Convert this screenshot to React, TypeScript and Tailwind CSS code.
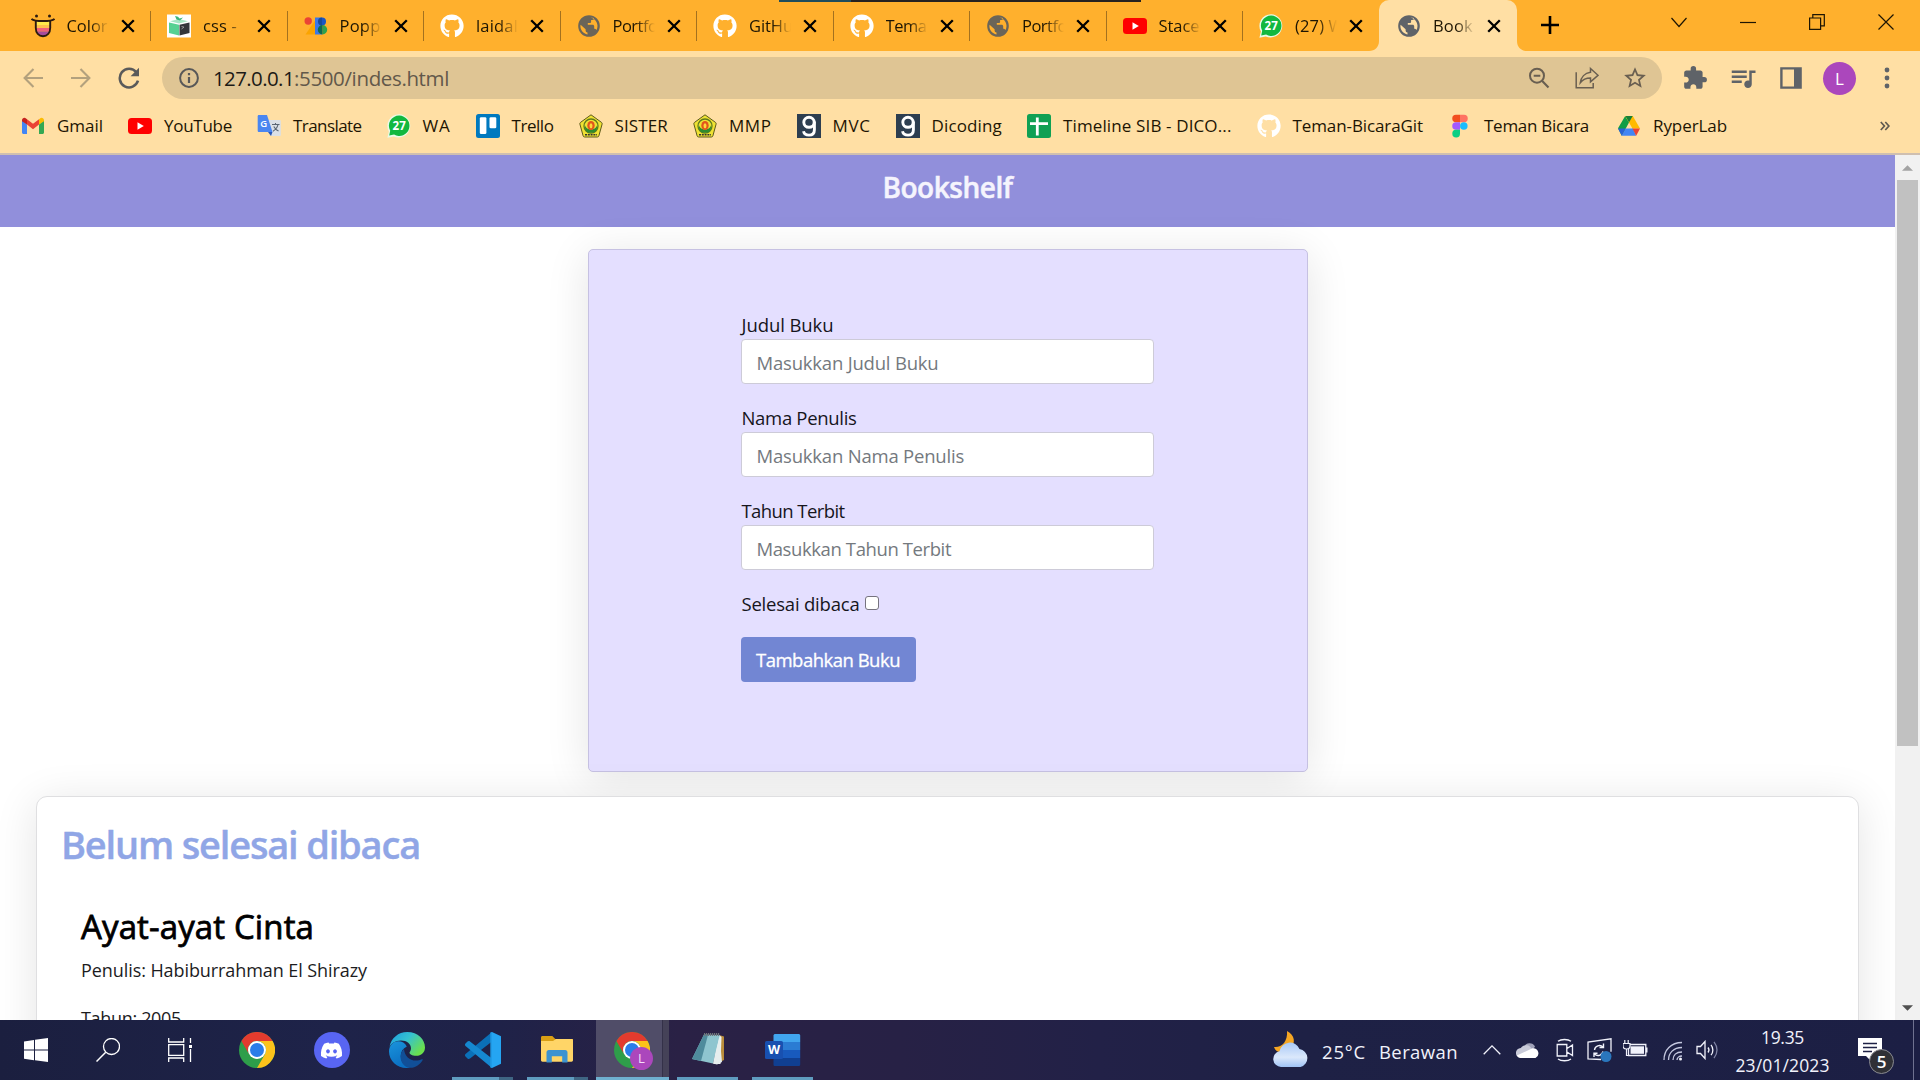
import { useLayoutEffect, useRef, type ReactNode } from "react";
import { FaGithub, FaDiscord } from "react-icons/fa";
import { MdExtension, MdQueueMusic, MdStarBorder } from "react-icons/md";

/** Text whose letter spacing is adjusted so that it spans exactly `w` pixels. */
function Fit({ w, className = "", children }: { w: number; className?: string; children: string }) {
  const ref = useRef<HTMLSpanElement>(null);
  useLayoutEffect(() => {
    const el = ref.current;
    if (!el) return;
    el.style.letterSpacing = "0px";
    const natural = el.getBoundingClientRect().width;
    el.style.letterSpacing = `${(w - natural) / children.length}px`;
  }, [w, children]);
  return (
    <span ref={ref} className={`inline-block shrink-0 whitespace-pre ${className}`}>
      {children}
    </span>
  );
}

/* ---------- site icons (24 x 24) ---------- */

const Github = () => <FaGithub className="size-6 text-white" />;

const YouTube = () => (
  <svg viewBox="0 0 24 24" className="size-6">
    <rect x="0" y="4" width="24" height="16" rx="3.5" fill="#f00" />
    <path d="M9.5 8.3v7.4l6.3-3.7z" fill="#fff" />
  </svg>
);

const Globe = ({ c = "#6b6558" }: { c?: string }) => (
  <svg viewBox="0 0 24 24" className="size-6">
    <path
      fill={c}
      fillRule="evenodd"
      d="M12 1.2a10.8 10.8 0 1 0 0 21.6 10.8 10.8 0 0 0 0-21.6zM13.5 3.5c4 .8 7 4.200 7 8.500 0 1.500-.4 2.900-1 4.100-.5-1-1.300-1.300-2.300-1.300v-2.400c0-1-.7-1.600-1.600-1.600h-4.800V9h2c.8 0 1.300-.6 1.300-1.300V6h1.200c1.200 0 1.900-.9 1.700-2zM3.600 10.800l5 4.400v1.200c0 1.200.8 2 1.900 2v2c-4.200-.7-7.100-4.200-7.100-8.300z"
    />
  </svg>
);

const ColorHunt = () => (
  <svg viewBox="0 0 24 24" className="size-6">
    <circle cx="5.500" cy="1.900" r="1.500" fill="#2b1a10" />
    <circle cx="18.500" cy="1.900" r="1.500" fill="#2b1a10" />
    <path d="M5 7h14v4H5z" fill="#ffe94a" />
    <path d="M5 11h14v3H5z" fill="#ffc04d" />
    <path d="M5 14h14c0 1.600-.3 2.600-.9 3.500H5.900C5.200 16.500 5 15.500 5 14z" fill="#f0607a" />
    <path d="M5.900 17.500h12.200C17 20.300 14.700 22 12 22s-5-1.700-6.100-4.500z" fill="#a64b9c" />
    <path d="M.5 4.800C2.500 7 6 7 12 7s9.500 0 11.500-2.200M4.800 7v7c0 5 3 8.200 7.200 8.200s7.200-3.200 7.200-8.200V7" fill="none" stroke="#2b1a10" strokeWidth="1.900" />
  </svg>
);

const CodeBox = () => (
  <svg viewBox="0 0 24 24" className="size-6">
    <path d="M0 .5h24v23H0z" fill="#fff" />
    <path d="M2 8.500l10 2.300V21.500L2 19z" fill="#57d193" />
    <path d="M12.500 10.800L22.500 8.500V19l-10 2.500z" fill="#33363b" />
    <path d="M3 7.200L12 5l9 2.200-9 2.300z" fill="#a5e6c5" />
    <path d="M8 2l3 .8 1.500 1.700L16 3.500l-3 3-3.500-1z" fill="#3fb57c" />
    <path d="M14.500 12.500l2.500.6L14.500 15" stroke="#aaa" fill="none" strokeWidth=".8" />
  </svg>
);

const GoogleFonts = () => (
  <svg viewBox="0 0 24 24" className="size-6">
    <path d="M11 6.500V20.500H1.500z" fill="#fba400" />
    <circle cx="4.200" cy="7" r="3.700" fill="#ea4335" />
    <path d="M11 3.500h7v17h-7z" fill="#3b78e7" />
    <path d="M18 3.500a4 4 0 0 1 0 8z" fill="#1a56c4" />
    <path d="M18 3.500a4 4 0 0 0 0 8z" fill="#174a9c" />
    <path d="M18.500 11a4.700 4.700 0 1 1 0 9.400z" fill="#2ea24e" />
    <path d="M18.500 11a4.700 4.700 0 0 0 0 9.400z" fill="#0f6a50" />
  </svg>
);

const WhatsApp = () => (
  <svg viewBox="0 0 24 24" className="size-6">
    <path d="M12 .3a11.600 11.600 0 0 0-10.100 17.300L.4 23.700l6.300-1.300A11.600 11.600 0 1 0 12 .3z" fill="#e9fbe9" />
    <path d="M12.200 1.600a10.200 10.200 0 0 0-9 15.200l-1 4.800 4.900-1A10.200 10.200 0 1 0 12.200 1.600z" fill="#12b83f" />
    <text x="12.200" y="16" textAnchor="middle" fontSize="11.500" fontWeight="700" fill="#fff" fontFamily="Open Sans, sans-serif">27</text>
  </svg>
);

const Gmail = () => (
  <svg viewBox="0 0 24 24" className="size-6">
    <path d="M1 6v12.500c0 .9.700 1.500 1.500 1.500H6v-9.500z" fill="#4285f4" />
    <path d="M23 6v12.500c0 .9-.7 1.500-1.500 1.500H18v-9.500z" fill="#34a853" />
    <path d="M6 10.500V5.200l6 4.600 6-4.600v5.300l-6 4.700z" fill="#ea4335" />
    <path d="M1 6.300C1 4 3.600 3.200 5 4.400l1 .8v5.300L1 7.200z" fill="#c5221f" />
    <path d="M23 6.300c0-2.300-2.600-3.100-4-1.900l-1 .8v5.300l5-3.300z" fill="#fbbc04" />
  </svg>
);

const Translate = () => (
  <svg viewBox="0 0 24 24" className="size-6">
    <path d="M10 6h12.500c.8 0 1.300.5 1.300 1.300v13.400c0 .8-.5 1.300-1.300 1.300H14z" fill="#dbe0e6" />
    <path d="M2 1h8l5.500 17H2C1.200 18 .7 17.500.7 16.700V2.300C.7 1.500 1.200 1 2 1z" fill="#4a86f0" />
    <path d="M11 18h4.500L14 22z" fill="#2857b8" />
    <text x="6.800" y="12.800" textAnchor="middle" fontSize="9.500" fontWeight="600" fill="#fff" fontFamily="Open Sans, sans-serif">G</text>
    <path d="M15 10.500h7.500M18.500 9v1.500M21 10.500c-.6 3-2.700 5.300-5 6.700M16.800 12.500c1 2 2.800 3.600 4.700 4.500" stroke="#5b6673" strokeWidth="1.100" fill="none" />
  </svg>
);

const Trello = () => (
  <svg viewBox="0 0 24 24" className="size-6">
    <rect width="24" height="24" rx="2.500" fill="#0079bf" />
    <rect x="3.800" y="3.300" width="6.600" height="16.800" rx="1.300" fill="#fff" />
    <rect x="13.500" y="3.300" width="6.800" height="11" rx="1.300" fill="#fff" />
  </svg>
);

const Campus = () => (
  <svg viewBox="0 0 24 24" className="size-6">
    <path d="M12 .8l10.500 7.600c.6.500.8 1 .6 1.700l-3.200 11.700c-.2.700-.7 1.200-1.500 1.200H5.600c-.8 0-1.300-.5-1.500-1.200L.9 10.100c-.2-.7 0-1.200.6-1.700z" fill="#efe234" stroke="#5c5a1c" strokeWidth="1" />
    <circle cx="12" cy="12" r="7" fill="none" stroke="#5f7a1d" strokeWidth="1.300" />
    <path d="M6 11.500C7.500 17 16.500 17 18 11.500c.5 3-.8 6-3 7H9c-2.200-1-3.500-4-3-7z" fill="#2e8b2e" />
    <ellipse cx="12" cy="11.500" rx="3.700" ry="4.600" fill="#e2561c" />
    <ellipse cx="12" cy="11.800" rx="1.500" ry="2.600" fill="#ffd83a" />
    <path d="M6 20.700h12" stroke="#333" strokeWidth="1.500" strokeDasharray="2 .8" />
  </svg>
);

const Dicoding = () => (
  <svg viewBox="0 0 24 24" className="size-6">
    <rect width="24" height="24" fill="#2d3e50" />
    <ellipse cx="12" cy="8.300" rx="5.200" ry="5" fill="none" stroke="#fff" strokeWidth="2.900" />
    <path d="M17.400 7.500v8.200c0 3.500-2 5.400-5.400 5.400-3 0-5-1.400-5.500-3.800" fill="none" stroke="#fff" strokeWidth="2.900" />
  </svg>
);

const Sheets = () => (
  <svg viewBox="0 0 24 24" className="size-6">
    <rect width="24" height="24" rx="2.500" fill="#10a054" />
    <path d="M3 9.600h18M10.300 3.500v18" stroke="#fff" strokeWidth="2.800" />
  </svg>
);

const Figma = () => (
  <svg viewBox="0 0 24 24" className="size-6">
    <path d="M12 .8H8a3.750 3.750 0 0 0 0 7.500h4z" fill="#f24e1e" />
    <path d="M12 .8h4a3.750 3.750 0 0 1 0 7.500h-4z" fill="#ff7262" />
    <path d="M12 8.300H8a3.750 3.750 0 0 0 0 7.500h4z" fill="#a259ff" />
    <circle cx="15.800" cy="12.050" r="3.750" fill="#1abcfe" />
    <path d="M8 15.800h4v3.750a3.850 3.850 0 1 1-4-3.750z" fill="#0acf83" />
  </svg>
);

const Drive = () => (
  <svg viewBox="0 0 24 24" className="size-6">
    <path d="M8.200 2L12 8.600 8.900 14.200 4.800 21.700 1 14.200z" fill="#0f9d45" />
    <path d="M8.200 2h7.600L23 14.500h-7.600L12 8.600z" fill="#ffba00" />
    <path d="M8.400 2h7.300L12 8.600z" fill="#188038" />
    <path d="M8.700 14.500H16l3.200 7.200H4.700z" fill="#4285f4" />
    <path d="M15.400 14.500H23l-3.800 7.200z" fill="#ea4335" />
    <path d="M1 14.500h7.700l-4 7.200z" fill="#2a62d6" />
  </svg>
);

const Chrome = () => (
  <svg viewBox="0 0 36 36" className="size-9">
    <circle cx="18" cy="18" r="18" fill="#2e9e4a" />
    <path d="M2.400 9A18 18 0 0 1 33.600 9H18a9 9 0 0 0-7.800 13.500z" fill="#e33b2e" />
    <path d="M33.600 9A18 18 0 0 1 18 36l7.800-13.500A9 9 0 0 0 25.800 13.500 9 9 0 0 0 18 9z" fill="#fcc21b" />
    <circle cx="18" cy="18" r="9" fill="#fff" />
    <circle cx="18" cy="18" r="7" fill="#2a7de9" />
  </svg>
);

/* ---------- browser chrome ---------- */

const CloseX = () => (
  <svg viewBox="0 0 14 14" className="size-[14px] shrink-0">
    <path d="M1.200 1.200l11.600 11.600M12.800 1.200L1.200 12.800" stroke="#000" strokeWidth="2.300" />
  </svg>
);

const tabs: { icon: ReactNode; title: string; w: number }[] = [
  { icon: <ColorHunt />, title: "Color", w: 41 },
  { icon: <CodeBox />, title: "css -", w: 34 },
  { icon: <GoogleFonts />, title: "Popp", w: 41 },
  { icon: <Github />, title: "laidal", w: 42 },
  { icon: <Globe />, title: "Portfo", w: 45 },
  { icon: <Github />, title: "GitHu", w: 44 },
  { icon: <Github />, title: "Tema", w: 41 },
  { icon: <Globe />, title: "Portfo", w: 45 },
  { icon: <YouTube />, title: "Stace", w: 41 },
  { icon: <WhatsApp />, title: "(27) W", w: 49 },
];

function TabBody({ icon, title, w }: { icon: ReactNode; title: string; w: number }) {
  return (
    <>
      <div className="flex w-6 shrink-0 justify-center">{icon}</div>
      <div className="ml-3 w-[42px] shrink-0 overflow-hidden text-[16.500px] leading-6 text-[#1d1503] [mask-image:linear-gradient(to_right,black_55%,transparent_100%)]">
        <Fit w={w}>{title}</Fit>
      </div>
      <div className="ml-[12px] flex">
        <CloseX />
      </div>
    </>
  );
}

function TabStrip() {
  return (
    <div className="relative flex h-[51px] bg-[#ffb02d]">
      <div className="absolute left-[779px] top-0 flex h-[2px] w-[362px] bg-[#262220]">
        <div className="w-[72px] bg-[#1f4d5c]" />
      </div>
      <div className="flex w-[1379px] pl-[14.500px]">
        {tabs.map((t, i) => (
          <div key={i} className="flex w-[136.500px] shrink-0 items-center pl-4">
            <TabBody {...t} />
            {i < 9 && <div className="ml-auto h-[30px] w-px bg-[#a3711f]" />}
          </div>
        ))}
      </div>
      <svg viewBox="0 0 10 10" className="-ml-[10px] size-[10px] self-end">
        <path d="M10 0v10H0C6 10 10 6 10 0z" fill="#ffdfa4" />
      </svg>
      <div className="flex w-[138px] items-center rounded-t-[10px] bg-[#ffdfa4] pl-[18px]">
        <TabBody icon={<Globe c="#5f6368" />} title="Book" w={40} />
      </div>
      <svg viewBox="0 0 10 10" className="size-[10px] self-end">
        <path d="M0 0v10h10C4 10 0 6 0 0z" fill="#ffdfa4" />
      </svg>
      <svg viewBox="0 0 18 18" className="ml-[14px] mt-4 size-[18px]">
        <path d="M9 0v18M0 9h18" stroke="#000" strokeWidth="2.600" />
      </svg>
      <div className="ml-auto flex h-[43px] items-center gap-[53px] pr-[26px] text-[#1d1503]">
        <svg viewBox="0 0 16 16" className="size-4"><path d="M.5 4L8 12.500 15.500 4" fill="none" stroke="currentColor" strokeWidth="1.200" /></svg>
        <svg viewBox="0 0 16 16" className="size-4"><path d="M0 8.500h16" stroke="currentColor" strokeWidth="1.200" /></svg>
        <svg viewBox="0 0 16 16" className="size-4"><path d="M.6 4h11v11.300H.6zM3.800 4V.6h11.500v11.300h-3.700" fill="none" stroke="currentColor" strokeWidth="1.200" /></svg>
        <svg viewBox="0 0 16 16" className="size-4"><path d="M.5.500l15 15M15.500.500l-15 15" stroke="currentColor" strokeWidth="1.200" /></svg>
      </div>
    </div>
  );
}

function Toolbar() {
  return (
    <div className="flex h-[54px] items-center bg-[#ffdfa4]">
      <svg viewBox="0 0 20 20" className="ml-[23px] size-5 text-[#b3a17d]"><path d="M20 10H2M10.500 1L1.600 10l8.900 9" fill="none" stroke="currentColor" strokeWidth="2.100" /></svg>
      <svg viewBox="0 0 20 20" className="ml-7 size-5 text-[#b3a17d]"><path d="M0 10h18M9.500 1l8.900 9-8.900 9" fill="none" stroke="currentColor" strokeWidth="2.100" /></svg>
      <svg viewBox="0 0 22 22" className="ml-[27px] size-[22px]">
        <path d="M18.300 5.200A9.300 9.300 0 1 0 20 13.700" fill="none" stroke="#5a5a5a" strokeWidth="2.500" />
        <path d="M21 .8v8.400h-8.400z" fill="#5a5a5a" />
      </svg>
      <div className="ml-[22px] flex h-[42px] w-[1500px] items-center rounded-full bg-[#dfc594] pl-[17px]">
        <svg viewBox="0 0 20 20" className="size-5">
          <circle cx="10" cy="10" r="8.900" fill="none" stroke="#585858" strokeWidth="2" />
          <path d="M10 9v6M10 5v2.200" stroke="#585858" strokeWidth="2.200" />
        </svg>
        <div className="ml-[14px] flex text-[20.500px] leading-none">
          <Fit w={81} className="text-[#1c1a16]">127.0.0.1</Fit>
          <Fit w={155} className="text-[#62584a]">:5500/indes.html</Fit>
        </div>
        <div className="ml-auto flex items-center gap-6 pr-[15px] text-[#695f51]">
          <svg viewBox="0 0 24 24" className="size-6">
            <circle cx="10" cy="9.700" r="7" fill="none" stroke="currentColor" strokeWidth="2" />
            <path d="M15 14.700l6.500 6.800M6.700 9.700h6.600" stroke="currentColor" strokeWidth="2.100" fill="none" />
          </svg>
          <svg viewBox="0 0 24 24" className="size-6">
            <path d="M1.200 6.200v15.600h17V17" fill="none" stroke="currentColor" strokeWidth="1.500" />
            <path d="M15.500 2.500l7.500 6.800-7.500 6.500v-3.700c-4.500 0-7.500 1.300-10.200 4.700.7-5.500 4.500-9.800 10.200-10.500z" fill="none" stroke="currentColor" strokeWidth="1.500" />
          </svg>
          <MdStarBorder className="size-[26px] -mx-px" />
        </div>
      </div>
      <div className="flex items-center text-[#5f6368]">
        <MdExtension className="ml-5 size-[26px]" />
        <MdQueueMusic className="ml-5 size-[30px]" />
        <svg viewBox="0 0 22 22" className="ml-[22px] size-[22px]">
          <path d="M1.400 1.400h19.200v19.200H1.400z" fill="none" stroke="currentColor" strokeWidth="2.400" />
          <path d="M14 1h7v20h-7z" fill="currentColor" />
        </svg>
        <div className="ml-[21px] flex size-[33px] items-center justify-center rounded-full bg-[#ab47bc] text-[17px] leading-none text-white">L</div>
        <svg viewBox="0 0 6 24" className="ml-7 h-6 w-[6px]">
          <circle cx="3" cy="4" r="2.400" fill="currentColor" /><circle cx="3" cy="12" r="2.400" fill="currentColor" /><circle cx="3" cy="20" r="2.400" fill="currentColor" />
        </svg>
      </div>
    </div>
  );
}

const bookmarks: { icon: ReactNode; name: string; w: number; gap?: boolean }[] = [
  { icon: <Gmail />, name: "Gmail", w: 46 },
  { icon: <YouTube />, name: "YouTube", w: 68 },
  { icon: <Translate />, name: "Translate", w: 68.5 },
  { icon: <WhatsApp />, name: "WA", w: 28 },
  { icon: <Trello />, name: "Trello", w: 42 },
  { icon: <Campus />, name: "SISTER", w: 53.5 },
  { icon: <Campus />, name: "MMP", w: 42.5 },
  { icon: <Dicoding />, name: "MVC", w: 38 },
  { icon: <Dicoding />, name: "Dicoding", w: 70.5 },
  { icon: <Sheets />, name: "Timeline SIB - DICO...", w: 168.5 },
  { icon: <Github />, name: "Teman-BicaraGit", w: 130.5 },
  { icon: <Figma />, name: "Teman Bicara", w: 105, gap: true },
  { icon: <Drive />, name: "RyperLab", w: 74 },
];

function Bookmarks() {
  return (
    <div className="flex h-[50px] items-start border-b-2 border-[#cfbfb0] bg-[#ffdfa4] pl-[21px] pt-[9px] text-[17px] leading-6 text-[#1d1503]">
      <div className="flex gap-[25px]">
        {bookmarks.map((b) => (
          <div key={b.name} className={b.gap ? "flex items-center gap-3 pr-[3px]" : "flex items-center gap-3"}>
            {b.icon}
            <Fit w={b.w} className="-mt-px">{b.name}</Fit>
          </div>
        ))}
      </div>
      <svg viewBox="0 0 10 10" className="ml-auto mr-[30px] mt-[7px] size-[10px]">
        <path d="M.8 1l3.600 4L.8 9M5.300 1l3.600 4-3.600 4" fill="none" stroke="#5f5a50" strokeWidth="1.700" />
      </svg>
    </div>
  );
}

/* ---------- page ---------- */

function Field({ label, w, placeholder, tight }: { label: string; w: number; placeholder: string; tight?: boolean }) {
  return (
    <div className="flex h-[93px] flex-col">
      <label className="h-[27px] pl-px text-[18.500px] leading-[25px] text-[#16151c]">
        <Fit w={w}>{label}</Fit>
      </label>
      <input
        placeholder={placeholder}
        className={
          (tight ? "tracking-[-0.400px] " : "tracking-[-0.200px] ") +
          "h-[45px] w-[413px] rounded-[4px] border border-[#cdcbd8] bg-white px-[15px] pt-px text-[18.500px] outline-none placeholder:text-[#74797e]"
        }
      />
    </div>
  );
}

function Page() {
  return (
    <div className="flex h-[865px] overflow-hidden bg-white">
      <div className="flex w-[1895px] flex-col">
        <header className="flex h-[72px] shrink-0 justify-center bg-[#918fdb] pt-[11px] text-[28px] font-semibold leading-[42px] text-[#f5f4fd] [-webkit-text-stroke:0.500px_#f5f4fd]">
          <Fit w={130}>Bookshelf</Fit>
        </header>
        <section className="relative z-0 mt-[22px] h-[523px] w-[720px] shrink-0 self-center rounded-[5px] border border-[#c6c1e2] bg-[#e4dfff] pl-[152px] pt-[62px] shadow-[0_6px_44px_rgba(0,0,0,0.11)]">
          <Field label="Judul Buku" w={92} placeholder="Masukkan Judul Buku" />
          <Field label="Nama Penulis" w={115} placeholder="Masukkan Nama Penulis" />
          <Field label="Tahun Terbit" w={103} placeholder="Masukkan Tahun Terbit" tight />
          <label className="flex h-[27px] items-center pl-px text-[18.500px] leading-[27px] text-[#16151c]">
            <Fit w={118} className="-mt-0.5">Selesai dibaca</Fit>
            <input type="checkbox" className="mb-[3px] ml-[5px] size-[14.500px] appearance-none rounded-[3px] border border-[#76737f] bg-white" />
          </label>
          <button className="mt-[19px] h-[45px] w-[175px] rounded-[4px] bg-[#7286d3] pt-px text-[18.500px] font-medium text-white [-webkit-text-stroke:0.300px_white]">
            <Fit w={144}>Tambahkan Buku</Fit>
          </button>
        </section>
        <section className="relative z-10 ml-9 mt-[24px] h-[400px] w-[1823px] shrink-0 rounded-[11px] border border-[#dfdfe1] bg-white pl-6 pt-[21px] shadow-[0_6px_44px_rgba(0,0,0,0.11)]">
          <h1 className="h-[52px] text-[38px] font-semibold leading-[52px] text-[#90a6e6] [-webkit-text-stroke:0.400px_#90a6e6]">
            <Fit w={359}>Belum selesai dibaca</Fit>
          </h1>
          <div className="pl-[20px] pt-[34px] text-black">
            <h2 className="h-[46px] text-[33px] font-medium leading-[46px] [-webkit-text-stroke:0.800px_black]">
              <Fit w={233}>Ayat-ayat Cinta</Fit>
            </h2>
            <p className="mt-[7px] h-[27px] text-[18px] leading-[27px] text-[#1c1c1e]">
              <Fit w={286}>Penulis: Habiburrahman El Shirazy</Fit>
            </p>
            <p className="mt-[21px] h-[27px] text-[18px] leading-[27px] text-[#1c1c1e]">
              <Fit w={100}>Tahun: 2005</Fit>
            </p>
          </div>
        </section>
      </div>
      <div className="flex w-[25px] flex-col items-center bg-[#f1f1f1]">
        <svg viewBox="0 0 12 6" className="mt-[10px] h-[6px] w-[11px] shrink-0"><path d="M0 6l6-6 6 6z" fill="#a3a3a3" /></svg>
        <div className="mt-[9px] h-[566px] w-[21px] shrink-0 bg-[#c1c1c1]" />
        <svg viewBox="0 0 12 6" className="mb-[9px] mt-auto h-[6px] w-[11px] shrink-0"><path d="M0 0l6 6 6-6z" fill="#505050" /></svg>
      </div>
    </div>
  );
}

/* ---------- taskbar ---------- */

function TaskItem({ children, bar, tail }: { children: ReactNode; bar?: boolean; tail?: boolean }) {
  return (
    <div className="flex w-[75px] shrink-0 flex-col">
      <div className="flex h-[57px] items-center justify-center pt-[3px]">{children}</div>
      {bar && (
        <div className="flex h-[3px] justify-start pl-[7px]">
          <div className={tail ? "w-[47px] bg-[#5f9cbf]" : "w-[61px] bg-[#5f9cbf]"} />
          {tail && <div className="w-[14px] bg-[#3f6583]" />}
        </div>
      )}
    </div>
  );
}

function TaskApps() {
  return (
    <div className="flex">
      <div className="flex w-[219px] shrink-0 items-center gap-12 pl-6">
        <svg viewBox="0 0 24 24" className="size-6">
          <path d="M0 3.400l10-1.400v9.600H0zM11 1.800L24 0v11.600H11zM0 12.600h10v9.600L0 20.800zM11 12.600h13V24l-13-1.800z" fill="#fff" />
        </svg>
        <svg viewBox="0 0 24 24" className="size-6"><circle cx="15.500" cy="8.500" r="8" fill="none" stroke="#fff" strokeWidth="1.300" /><path d="M9.700 14.300L.5 23.500" stroke="#fff" strokeWidth="1.500" /></svg>
        <svg viewBox="0 0 24 24" className="size-6">
          <path d="M.7 0v4h15V0M.7 24v-4h15v4M.7 6.700h15v10.600H.7zM22.500 0v5M22.500 11v13" fill="none" stroke="#fff" strokeWidth="1.300" />
          <path d="M21 7h3v3h-3z" fill="#fff" />
        </svg>
      </div>
      <TaskItem><Chrome /></TaskItem>
      <TaskItem>
        <div className="flex size-9 items-center justify-center rounded-full bg-[#5865f2]"><FaDiscord className="size-[23px] text-white" /></div>
      </TaskItem>
      <TaskItem>
        <svg viewBox="0 0 36 36" className="size-9">
          <defs>
            <linearGradient id="eg" x1="0" y1="0" x2="1" y2=".6"><stop offset="0" stopColor="#1a9be0" /><stop offset=".5" stopColor="#35c1d0" /><stop offset="1" stopColor="#6be04c" /></linearGradient>
            <linearGradient id="eb" x1="0" y1="0" x2=".4" y2="1"><stop offset="0" stopColor="#1a94dc" /><stop offset="1" stopColor="#0b6fc2" /></linearGradient>
          </defs>
          <path d="M.500 15C2 6 9.500 0 18.200 0 29 0 36 7.500 36 15.500c0 5-3.800 8.300-8.800 8.300-4.200 0-6.700-1.600-6.700-3 0-1 1.500-1.700 1.500-4.500C22 12 18 8.500 12 8.500 6 8.500 2 11.500.500 15z" fill="url(#eg)" />
          <path d="M11.800 24c0-4.500 2-7.500 6-9.500-1.500-3.500-5-5.300-8.500-5.300C4 9.200 0 14 0 19.500 0 28.500 8 36 17.500 36c1.500 0 3-.2 4-.5C15.500 34.500 11.800 29.500 11.800 24z" fill="url(#eb)" />
          <path d="M15 17c-2 1.500-3.500 4.500-3.500 7.500 0 6.500 4.500 11.300 10 11.300 5 0 10-3.500 12.200-7.800.3-.7-.3-1-.9-.7-1.500.8-3.800 1.300-5.800 1.300-6.500 0-11.500-4.500-12-11.600z" fill="#114f97" />
        </svg>
      </TaskItem>
      <div className="flex w-[152px] shrink-0 pl-px">
        <TaskItem bar tail>
          <svg viewBox="0 0 36 36" className="size-9">
            <path d="M27 0l9 4.300v27.400L27 36z" fill="#25a5f2" />
            <path d="M27 0v9.500L5 26.500c-.8.600-1.800.6-2.500-.1L.5 24.500c-.7-.7-.7-1.900 0-2.600z" fill="#0b70b8" />
            <path d="M27 36v-9.500L5 9.500c-.8-.6-1.800-.6-2.500.1L.5 11.500c-.7.700-.7 1.900 0 2.600z" fill="#1588d0" />
            <path d="M25.300 35.400L27 36V0l-1.700.6z" fill="#1f9ae6" />
          </svg>
        </TaskItem>
        <TaskItem bar tail>
          <svg viewBox="0 0 32 28" className="mr-px h-7 w-8">
            <path d="M0 1.500C0 .7.500 0 1.500 0h9.800l3 3H32v5H0z" fill="#d99f14" />
            <path d="M0 5h12l3-2h15.500c1 0 1.500.7 1.500 1.500V24c0 1-.6 1.700-1.500 1.700h-29C.6 25.700 0 25 0 24z" fill="#ffd567" />
            <path d="M5.500 26.500v-10c0-1.600.9-2.500 2.400-2.500h16.200c1.500 0 2.400.9 2.400 2.500v10h-5.300v-6.300H10.800v6.300z" fill="#3d93d0" />
          </svg>
        </TaskItem>
      </div>
      <div className="flex w-[73px] shrink-0 flex-col bg-[#504d68]">
        <div className="flex h-[57px]">
          <div className="relative w-[66px] pl-[18px] pt-3">
            <Chrome />
            <div className="absolute left-[34px] top-[27px] flex size-[23px] items-center justify-center rounded-full bg-[#ab47bc] text-[13px] leading-none text-[#f5dff8]">L</div>
          </div>
          <div className="w-[7px] border-l border-[#343149] bg-[#454258]" />
        </div>
        <div className="h-[3px] bg-[#6fb0cf]" />
      </div>
      <div className="flex pl-px">
        <TaskItem bar>
          <svg viewBox="0 0 32 32" className="mb-0.5 size-8">
            <path d="M27 2l5 1.500V27l-4 2z" fill="#b98d3b" />
            <path d="M26 1l3.500 3-1 27-7 0z" fill="#eef3f4" />
            <path d="M12 1.500L28 2 21 30.500 0 26z" fill="#8fc5cf" />
            <path d="M12 1.500L16 2 9 28 0 26z" fill="#4f8b9c" />
            <path d="M27.500 3L30 29l-5 2.500-4-1z" fill="#e6eeee" />
            <path d="M12 1.500h16" stroke="#70767c" strokeWidth="3" strokeDasharray="1.200 .8" />
          </svg>
        </TaskItem>
        <TaskItem bar>
          <svg viewBox="0 0 36 32" className="h-8 w-9">
            <path d="M10.500 0h23c1 0 1.700.7 1.700 1.600V8H8.500V1.600C8.500.7 9.200 0 10.500 0z" fill="#41a5ee" />
            <path d="M8.500 8h26.700v8H8.500z" fill="#2b7cd3" />
            <path d="M8.500 16h26.700v8H8.500z" fill="#185abd" />
            <path d="M8.500 24h26.700v6.400c0 1-.7 1.600-1.700 1.600H10.200c-1 0-1.700-.7-1.700-1.600z" fill="#103f91" />
            <rect x="0" y="7" width="18" height="18" rx="1.600" fill="#1850b0" />
            <text x="9" y="20.300" textAnchor="middle" fontSize="12.500" fontWeight="700" fill="#fff" fontFamily="Open Sans, sans-serif">W</text>
          </svg>
        </TaskItem>
      </div>
    </div>
  );
}

function Tray() {
  return (
    <div className="ml-auto flex shrink-0 text-[#f1f2fb]">
      <svg viewBox="0 0 36 36" className="mt-[11px] size-9">
        <defs>
          <linearGradient id="cl" x1="0" y1="0" x2="0" y2="1"><stop offset="0" stopColor="#a9c9f7" /><stop offset=".6" stopColor="#dbe8fb" /><stop offset="1" stopColor="#9fc3f5" /></linearGradient>
        </defs>
        <path d="M14 0c8 4 9 12 3 18.500C11 24 3 22 1 16c7 1 14-5 13-16z" fill="#f5a623" />
        <path d="M8 36a8 8 0 0 1-1.500-15.800A10.500 10.500 0 0 1 26.500 18 9.200 9.200 0 0 1 27.500 36z" fill="url(#cl)" />
      </svg>
      <div className="ml-[13px] flex gap-[13px] pt-[18px] text-[18.500px] leading-[27px]">
        <Fit w={44}>25°C</Fit>
        <Fit w={79}>Berawan</Fit>
      </div>
      <svg viewBox="0 0 18 10" className="ml-[25px] mt-[25px] h-[10px] w-[18px]"><path d="M.7 9.300L9 .9l8.300 8.400" fill="none" stroke="currentColor" strokeWidth="1.300" /></svg>
      <svg viewBox="0 0 24 16" className="ml-[15px] mt-[22px] h-4 w-6">
        <path d="M8 5a6 6 0 0 1 11-.5l-4 6z" fill="#a0a2b8" />
        <path d="M5 16A5 5 0 0 1 4.800 6 6.500 6.500 0 0 1 16 7l-5 9z" fill="#c9cbd9" />
        <path d="M4.500 16a4.500 4.500 0 0 1-3.700-2.500L16.500 6.200A5.200 5.200 0 0 1 19.500 16z" fill="#fff" />
      </svg>
      <svg viewBox="0 0 18 24" className="ml-4 mt-[18px] h-6 w-[18px]">
        <path d="M1.200 6.500h9.600v11.500H1.200zM11 10.500L16.500 7v10.500L11 14M2 3.300c3-2.400 10-2.400 13 0M2 21c3 2.300 10 2.300 13 0" fill="none" stroke="currentColor" strokeWidth="1.300" />
      </svg>
      <svg viewBox="0 0 26 24" className="ml-[13px] mt-[18px] h-6 w-[26px]">
        <path d="M14 21.500L1 20.800V4L24 .8v13" fill="none" stroke="currentColor" strokeWidth="1.300" />
        <path d="M7.500 12a5 5 0 0 1 8.500-3M16.500 5.500V9.500h-4M16 13.500a5 5 0 0 1-8.500 2.500M7 19v-3.700h3.500" fill="none" stroke="currentColor" strokeWidth="1.400" />
        <circle cx="19" cy="18.500" r="5.500" fill="#2a76bd" />
      </svg>
      <svg viewBox="0 0 25 18" className="ml-2.5 mt-[20px] h-[18px] w-[25px]">
        <path d="M5.500 15.500V4.500h17.300v11z" fill="none" stroke="currentColor" strokeWidth="1.300" />
        <path d="M7.500 6.300h13.500v7.500H7.500z" fill="currentColor" />
        <path d="M23 7.500h1.500v5H23z" fill="currentColor" />
        <path d="M0 3.500h7V6c0 2-1.500 3-3.500 3S0 8 0 6z" fill="#1e2145" stroke="currentColor" strokeWidth="1.200" />
        <path d="M1.800 0v3.500M5.200 0v3.500M3.500 9v6.500H6" stroke="currentColor" strokeWidth="1.200" fill="none" />
      </svg>
      <svg viewBox="0 0 20 20" className="ml-[15px] mt-[21px] size-5">
        <path d="M1 19C1 9 8 1.500 19 1.500M5.500 19c0-7 5-12.500 13.500-12.500M10 19c0-4.500 3-8 9-8M14 19c0-2 2-4 5-4" fill="none" stroke="#c5c8e0" strokeWidth="1.300" />
        <circle cx="17.500" cy="18" r="1.500" fill="currentColor" />
      </svg>
      <svg viewBox="0 0 22 20" className="ml-[13px] mt-[20px] h-5 w-[22px]">
        <path d="M1 6.500h3.500L9 1.500v17l-4.500-5H1z" fill="none" stroke="currentColor" strokeWidth="1.300" />
        <path d="M12 7.500c1.200 1.500 1.200 3.500 0 5M15 4.800c2.500 3 2.500 7.400 0 10.400" fill="none" stroke="currentColor" strokeWidth="1.300" />
        <path d="M18 1.800c4 5 4 11.400 0 16.400" fill="none" stroke="#7e82a3" strokeWidth="1.300" />
      </svg>
      <div className="ml-[17px] flex w-[95px] flex-col items-center pt-[3px] text-[17.500px] leading-[28px]">
        <Fit w={43}>19.35</Fit>
        <Fit w={94}>23/01/2023</Fit>
      </div>
      <div className="relative ml-[28px] w-[55px] pt-[18px]">
        <svg viewBox="0 0 24 24" className="size-6">
          <path d="M0 0h24v18H14v6l-6-6H0z" fill="#fff" />
          <path d="M5 5.500h14M5 9.500h14M5 13.500h9" stroke="#1e2145" strokeWidth="1.300" />
        </svg>
        <div className="absolute left-[11px] top-[29px] flex size-[25px] items-center justify-center rounded-full border border-[#8a8b92] bg-[#2f3036] text-[17px] font-semibold leading-none text-white">5</div>
      </div>
      <div className="mr-[6px] w-px bg-[#6f7290]" />
    </div>
  );
}

export default function App() {
  return (
    <div className="flex h-[1080px] w-[1920px] flex-col overflow-hidden font-['Open_Sans',sans-serif]">
      <TabStrip />
      <Toolbar />
      <Bookmarks />
      <Page />
      <footer className="flex h-[60px] shrink-0 bg-[linear-gradient(to_right,#1b1f3f_0,#1e2349_330px,#1f2248_500px,#2a2145_680px,#272145_900px,#222147_1100px,#1e2145_1300px,#1c1f44_1920px)]">
        <TaskApps />
        <Tray />
      </footer>
    </div>
  );
}
